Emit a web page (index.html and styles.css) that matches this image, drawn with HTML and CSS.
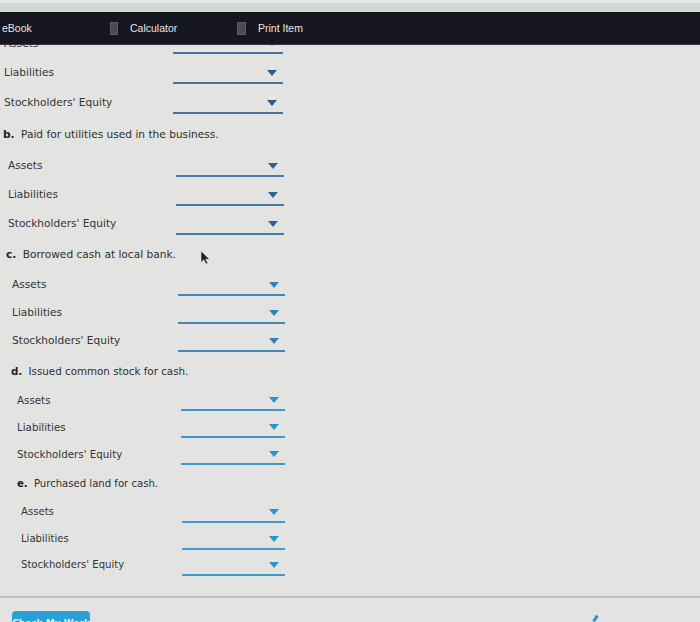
FILE: index.html
```html
<!DOCTYPE html>
<html lang="en">
<head>
    <meta charset="UTF-8">
    <meta name="viewport" content="width=device-width, initial-scale=1.0">
    <title>Worksheet</title>
    <link rel="stylesheet" href="styles.css">
</head>
<body>
    <div class="strip"></div>
    <div class="toolbar">
        <span class="tool tool-ebook">eBook</span>
        <span class="tool tool-calc"><span class="ico"></span>Calculator</span>
        <span class="tool tool-print"><span class="ico"></span>Print Item</span>
    </div>

    <div class="group group-a">
        <div class="row row-first">
            <span class="label">Assets</span>
            <span class="field"><span class="arrow"></span></span>
        </div>
        <div class="row">
            <span class="label">Liabilities</span>
            <span class="field"><span class="arrow"></span></span>
        </div>
        <div class="row">
            <span class="label">Stockholders' Equity</span>
            <span class="field"><span class="arrow"></span></span>
        </div>
    </div>

    <div class="group group-b">
        <p class="question"><b>b.</b> Paid for utilities used in the business.</p>
        <div class="row"><span class="label">Assets</span><span class="field"><span class="arrow"></span></span></div>
        <div class="row"><span class="label">Liabilities</span><span class="field"><span class="arrow"></span></span></div>
        <div class="row"><span class="label">Stockholders' Equity</span><span class="field"><span class="arrow"></span></span></div>
    </div>

    <div class="group group-c">
        <p class="question"><b>c.</b> Borrowed cash at local bank.<svg class="cursor" width="10" height="15" viewBox="0 0 10 15"><path d="M1 1 L1 12.5 L3.8 9.8 L6 14 L7.8 13.2 L5.7 9.2 L9.5 9.2 Z" fill="#1e1e1e" stroke="#e3e4e1" stroke-width="0.6"/></svg></p>
        <div class="row"><span class="label">Assets</span><span class="field"><span class="arrow"></span></span></div>
        <div class="row"><span class="label">Liabilities</span><span class="field"><span class="arrow"></span></span></div>
        <div class="row"><span class="label">Stockholders' Equity</span><span class="field"><span class="arrow"></span></span></div>
    </div>

    <div class="group group-d">
        <p class="question"><b>d.</b> Issued common stock for cash.</p>
        <div class="row"><span class="label">Assets</span><span class="field"><span class="arrow"></span></span></div>
        <div class="row"><span class="label">Liabilities</span><span class="field"><span class="arrow"></span></span></div>
        <div class="row"><span class="label">Stockholders' Equity</span><span class="field"><span class="arrow"></span></span></div>
    </div>

    <div class="group group-e">
        <p class="question"><b>e.</b> Purchased land for cash.</p>
        <div class="row"><span class="label">Assets</span><span class="field"><span class="arrow"></span></span></div>
        <div class="row"><span class="label">Liabilities</span><span class="field"><span class="arrow"></span></span></div>
        <div class="row"><span class="label">Stockholders' Equity</span><span class="field"><span class="arrow"></span></span></div>
    </div>

    <div class="footer">
        <button class="check-btn">Check My Work</button>
        <span class="mark"></span>
    </div>
</body>
</html>
```

FILE: styles.css
```css
*{
    margin: 0;
    padding: 0;
    box-sizing: border-box;
}
body{
    width: 700px;
    height: 622px;
    overflow: hidden;
    background-color: #e3e4e1;
    font-family: "DejaVu Sans", Verdana, sans-serif;
    color: #343536;
}
.strip{
    height: 12px;
    background-color: #d3d7d6;
    border-top: 3px solid #e6e8e7;
}
.toolbar{
    position: relative;
    z-index: 1;
    height: 33px;
    background-color: #15161f;
    border-bottom: 1px solid #3a3344;
    display: flex;
    align-items: center;
    font-family: "Liberation Sans", Arial, sans-serif;
    font-size: 10.5px;
    color: #e6e6e6;
}
.tool{
    display: flex;
    align-items: center;
}
.tool-ebook{
    margin-left: 2px;
    width: 108px;
}
.tool-calc{
    width: 127px;
}
.tool .ico{
    width: 8px;
    height: 13px;
    background-color: #4a4b50;
    border: 1px solid #5c5d62;
    margin-right: 12px;
}
.tool-print .ico{
    width: 9px;
}

.group{
    font-size: 10.6px;
}
.question{
    line-height: 12px;
    color: #2e2f30;
}
.question b{
    color: #1e1f20;
    margin-right: 3px;
}
.row{
    display: flex;
    align-items: flex-end;
}
.label{
    line-height: 12px;
    margin-bottom: 6px;
    white-space: nowrap;
}
.field{
    margin-left: auto;
    height: 20px;
    border-bottom: 2px solid #4b73a0;
    display: flex;
    justify-content: flex-end;
    align-items: center;
}
.arrow{
    width: 0;
    height: 0;
    border-left: 5px solid transparent;
    border-right: 5px solid transparent;
    border-top: 6px solid #2d5b8c;
    margin-right: 6px;
}

.group-a{
    margin-left: 4px;
    width: 279px;
}
.group-a .row{
    height: 30px;
}
.group-a .row-first{
    margin-top: -22px;
    height: 31px;
}
.group-a .row-first .label{
    margin-bottom: 5px;
}
.group-a .field{
    width: 110px;
    border-bottom-color: #4c6e98;
}

.group-b{
    margin-left: 3px;
    width: 281px;
}
.group-b .question{
    padding: 14px 0 8px;
}
.group-b .row{
    height: 29px;
    padding-left: 5px;
}
.group-b .field{
    width: 108px;
    border-bottom-color: #4a7aa6;
}
.group-b .arrow{
    border-top-color: #2e6396;
}

.group-c{
    margin-left: 6px;
    width: 279px;
}
.group-c .question{
    padding: 13px 0 3px;
}
.group-c .row{
    height: 28px;
    padding-left: 6px;
}
.group-c .field{
    width: 107px;
    border-bottom-color: #4287b8;
}
.group-c .arrow{
    border-top-color: #2f7fb8;
}
.cursor{
    margin-left: 24px;
    vertical-align: -7px;
}

.group-d{
    margin-left: 11px;
    width: 274px;
    font-size: 10.3px;
}
.group-d .question{
    padding: 13px 0 7px;
}
.group-d .row{
    height: 27px;
    padding-left: 6px;
}
.group-d .label{
    margin-bottom: 5px;
}
.group-d .field{
    width: 104px;
    border-bottom-color: #3f97c8;
}
.group-d .arrow{
    border-top-color: #2c92cc;
}

.group-e{
    margin-left: 17px;
    width: 268px;
    font-size: 10.1px;
}
.group-e .question{
    padding: 13px 0 6.5px;
}
.group-e .row{
    height: 26.5px;
    padding-left: 4px;
}
.group-e .label{
    margin-bottom: 5px;
}
.group-e .field{
    width: 103px;
    border-bottom-color: #3f9dcc;
}
.group-e .arrow{
    border-top-color: #2a95d0;
}

.footer{
    position: relative;
    margin-top: 20px;
    border-top: 2px solid #bcc0c3;
    height: 40px;
    padding: 13px 0 0 12px;
}
.check-btn{
    width: 78px;
    height: 24px;
    border: none;
    border-radius: 4px;
    background-color: #2aa0d6;
    color: #e8f3f8;
    font-family: "DejaVu Sans", Verdana, sans-serif;
    font-size: 9px;
    font-weight: bold;
    line-height: 24px;
}
.mark{
    position: absolute;
    left: 594px;
    top: 17px;
    width: 3px;
    height: 7px;
    background-color: #2a8fd0;
    transform: rotate(35deg);
}
```
